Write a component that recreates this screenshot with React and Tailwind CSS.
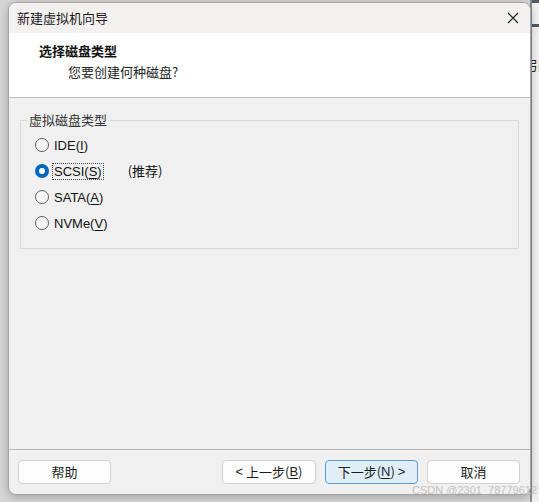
import React from 'react';

const ui = { fontFamily: '"Liberation Sans", "Noto Sans CJK SC", sans-serif' };
const cjk = { fontFamily: '"Noto Sans CJK SC", "Liberation Sans", sans-serif' };

function Radio({ label, hot, checked, focus, extra }) {
  // hot = index of the underlined mnemonic letter
  const before = label.slice(0, hot);
  const key = label[hot];
  const after = label.slice(hot + 1);
  return (
    <div className="flex items-center h-[26px]">
      {checked ? (
        <span className="w-[14px] h-[14px] rounded-full bg-[#0067c0] flex items-center justify-center">
          <span className="w-[6px] h-[6px] rounded-full bg-white" />
        </span>
      ) : (
        <span className="w-[14px] h-[14px] rounded-full border border-[#5f5f5f] bg-[#f5f5f5]" />
      )}
      <span
        className={`ml-[4px] px-[1px] leading-[15px] text-[13px] text-[#111] ${
          focus ? 'outline outline-1 outline-dotted outline-[#444]' : ''
        }`}
        style={ui}
      >
        {before}
        <span className="underline underline-offset-2">{key}</span>
        {after}
      </span>
      {extra && (
        <span className="ml-[25px] text-[13px] text-[#111]" style={cjk}>
          {extra}
        </span>
      )}
    </div>
  );
}

function Btn({ children, primary, className = '' }) {
  return (
    <button
      className={`h-[24px] w-[93px] rounded-[4px] border text-[13px] text-[#1b1b1b] flex items-center justify-center ${
        primary ? 'bg-[#e0eef9] border-[#5b9bd5]' : 'bg-[#fdfdfd] border-[#d0d0d0]'
      } ${className}`}
      style={cjk}
    >
      {children}
    </button>
  );
}

export default function App() {
  return (
    <div className="w-[539px] h-[502px] bg-[#d6d6d6] relative overflow-hidden">
      {/* window peeking out behind on the right */}
      <div className="absolute top-0 right-0 w-[9px] h-full bg-[#f0f0f0] border-l-2 border-[#8e8e8e] overflow-hidden">
        <div className="h-[3px] bg-[#4f5a64]" />
        <div className="mt-[21px] h-[3px] bg-[#4f5a64]" />
        <div className="mt-[31px] text-[13px] leading-[14px] -ml-[3px] text-[#222]" style={cjk}>引</div>
      </div>

      {/* dialog window */}
      <div className="absolute left-[8px] top-[2px] w-[523px] h-[493px] rounded-[8px] border border-[#a3a3a3] bg-[#f0f0f0] overflow-hidden flex flex-col shadow-[0_2px_8px_rgba(0,0,0,0.25)]">
        {/* title bar */}
        <div className="h-[30px] bg-[#f3f1f0] flex items-center justify-between pl-[8px] pr-[11px]">
          <span className="text-[13px] text-[#1a1a1a]" style={cjk}>新建虚拟机向导</span>
          <svg width="12" height="12" viewBox="0 0 12 12" className="text-[#222]">
            <path d="M1 1L11 11M11 1L1 11" stroke="currentColor" strokeWidth="1.2" />
          </svg>
        </div>

        {/* header */}
        <div className="h-[65px] bg-white border-b border-[#c0c0c0] pl-[30px] pt-[9px]">
          <div className="text-[13px] font-bold text-[#111] leading-[18px]" style={cjk}>选择磁盘类型</div>
          <div className="pl-[29px] mt-[3px] text-[13px] text-[#222] leading-[18px]" style={cjk}>您要创建何种磁盘?</div>
        </div>

        {/* body */}
        <div className="flex-1 px-[11px] pt-[14px]">
          <fieldset className="border border-[#dadada] px-[14px] pb-[12px] pt-[4px]">
            <legend className="ml-[-7px] px-[1px] text-[13px] text-[#333] leading-[16px]" style={cjk}>
              虚拟磁盘类型
            </legend>
            <Radio label="IDE(I)" hot={4} />
            <Radio label="SCSI(S)" hot={5} checked focus extra="(推荐)" />
            <Radio label="SATA(A)" hot={5} />
            <Radio label="NVMe(V)" hot={5} />
          </fieldset>
        </div>

        {/* footer */}
        <div className="border-t border-[#b8b8b8] flex items-center pl-[9px] pr-[10px] pt-[10px] pb-[10px]">
          <Btn className="w-[92px]">帮助</Btn>
          <div className="flex-1" />
          <Btn className="w-[94px]">
            <span style={ui}>&lt;</span>&nbsp;上一步(<span className="underline underline-offset-2" style={ui}>B</span>)
          </Btn>
          <Btn primary className="ml-[9px]">
            下一步(<span className="underline underline-offset-2" style={ui}>N</span>)&nbsp;<span style={ui}>&gt;</span>
          </Btn>
          <Btn className="ml-[9px]">取消</Btn>
        </div>
      </div>

      {/* watermark */}
      <div
        className="absolute right-[2px] bottom-[6px] text-[11px] leading-[12px] text-[#c4c4c4]"
        style={ui}
      >
        CSDN @2301_78779612
      </div>
    </div>
  );
}
